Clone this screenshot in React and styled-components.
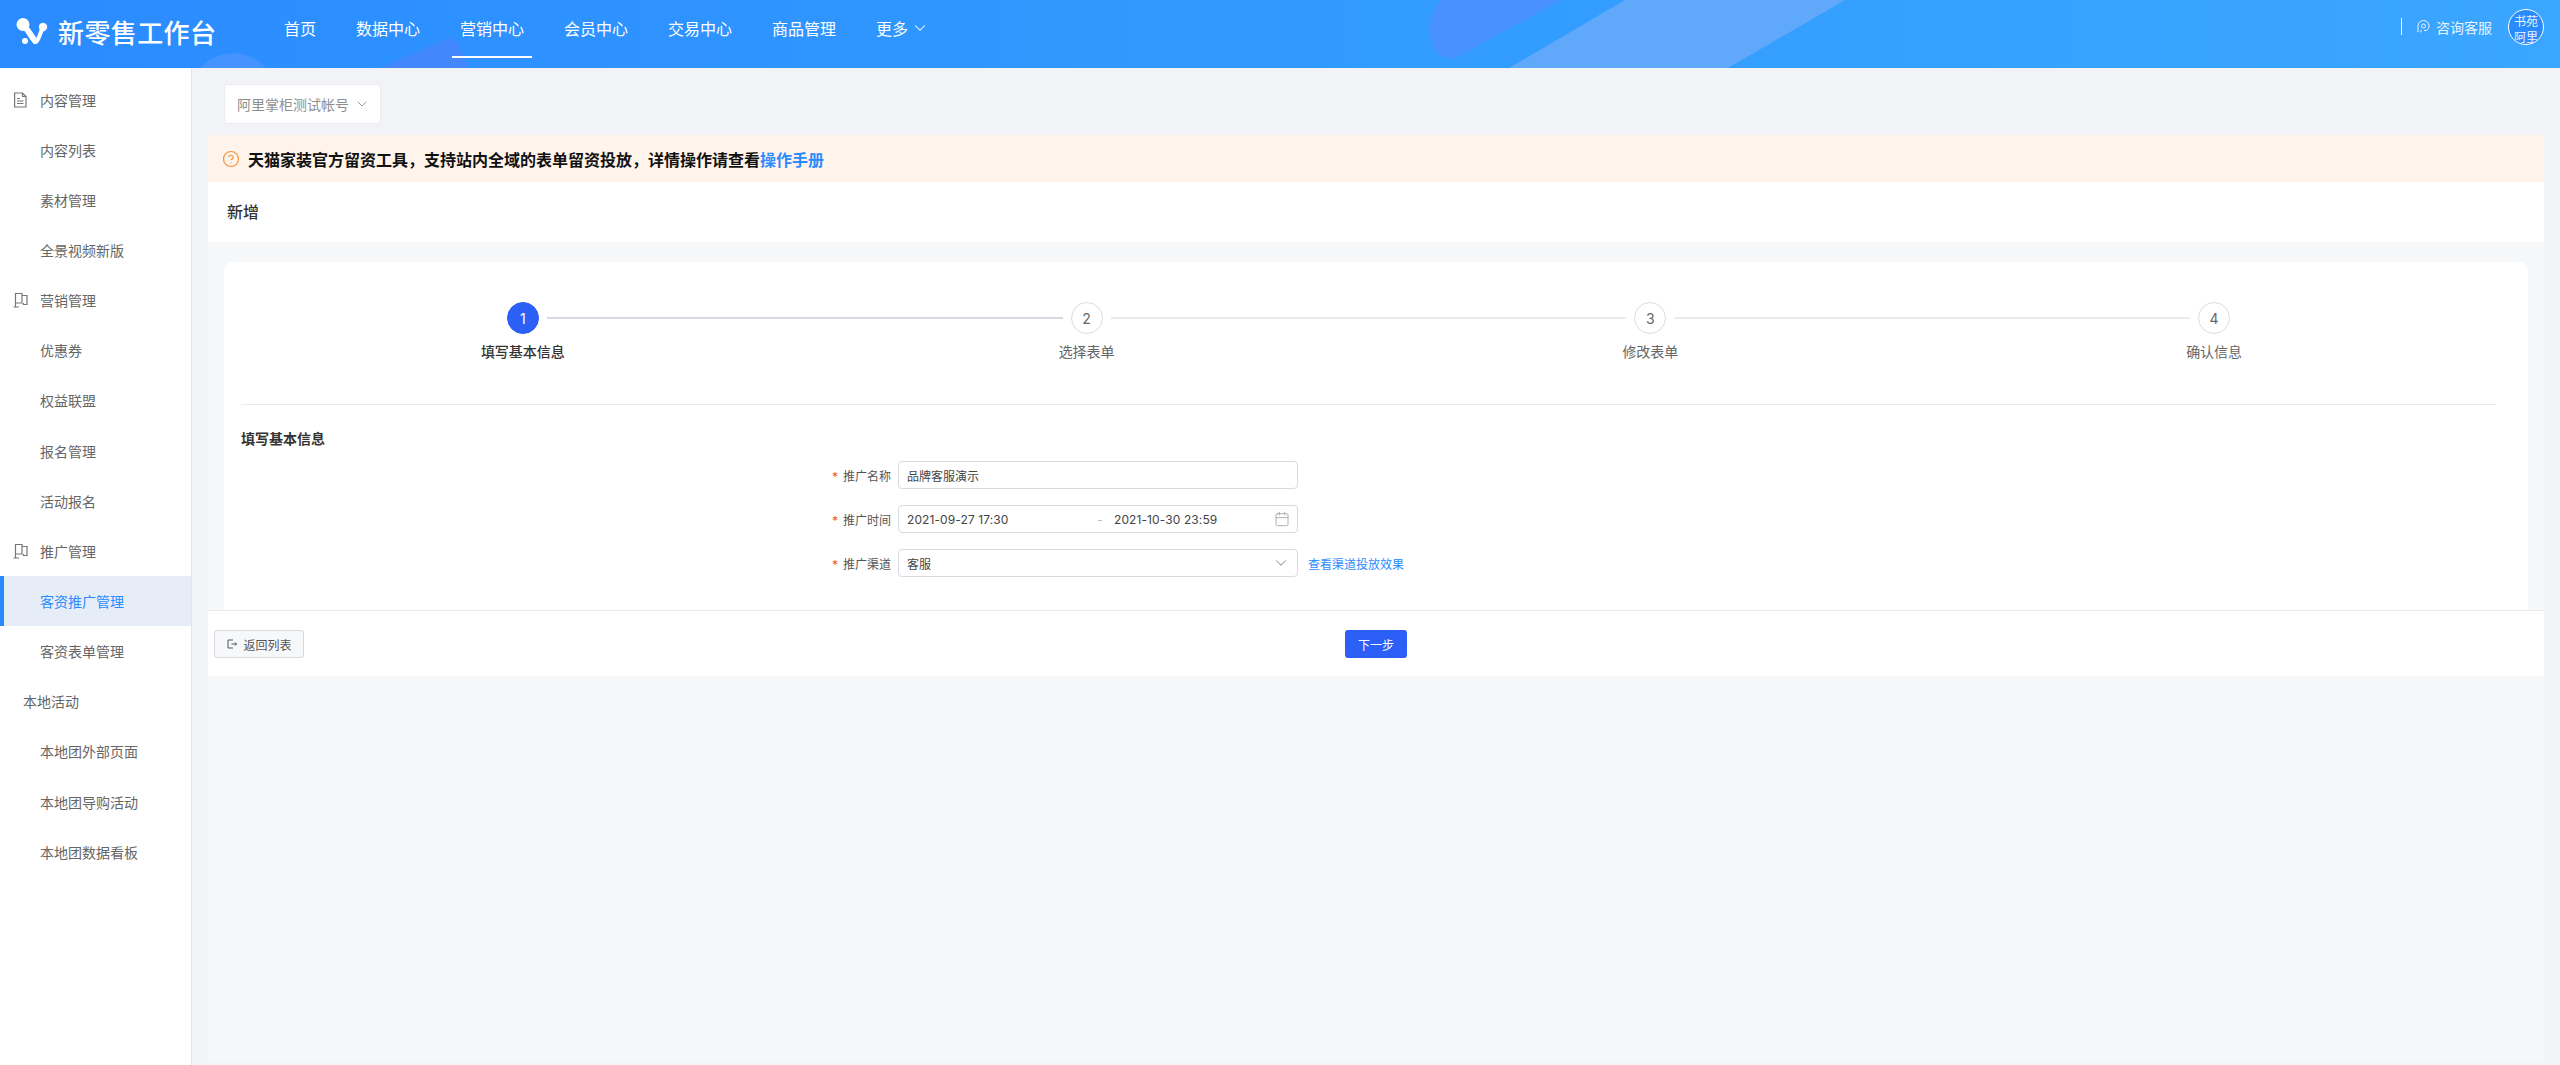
import React from 'react';
import styled, { createGlobalStyle } from 'styled-components';
import { ChevronDown, CircleHelp, Calendar } from 'lucide-react';

const FONT = `Inter, "Noto Sans CJK SC", "Noto Sans", sans-serif`;

const GlobalStyle = createGlobalStyle`
  html, body { margin: 0; padding: 0; height: 100%; }
  body { font-family: ${FONT}; color: #333; background: #f2f3f7; }
  * { box-sizing: border-box; }
`;

const Page = styled.div`
  display: flex;
  flex-direction: column;
  height: 1065px;
  overflow: hidden;
`;

const Header = styled.header`
  position: relative;
  flex: 0 0 68px;
  display: flex;
  align-items: center;
  padding-left: 15px;
  padding-right: 16px;
  overflow: hidden;
  background: linear-gradient(90deg, #2a8bff 0%, #339dff 60%, #3ba6ff 100%);
  color: #fff;
`;

const HeaderArt = styled.svg`
  position: absolute;
  left: 0;
  top: 0;
  width: 2560px;
  height: 68px;
`;

const Brand = styled.div`
  position: relative;
  display: flex;
  align-items: center;
  gap: 7px;
  width: 257px;
  margin-top: -6px;
  font-size: 26px;
  font-weight: 500;
  letter-spacing: 0.4px;
`;

const Nav = styled.nav`
  position: relative;
  display: flex;
  height: 68px;
  gap: 24px;
  margin-left: 4px;
`;

const NavItem = styled.a`
  display: flex;
  align-items: center;
  gap: 3px;
  padding: 0 8px;
  height: 58px;
  font-size: 16px;
  color: #fff;
  border-bottom: 2px solid ${p => (p.$active ? '#fff' : 'transparent')};
`;

const HeaderRight = styled.div`
  position: relative;
  display: flex;
  align-items: center;
  margin-left: auto;
  margin-top: -15px;
  font-size: 14px;
`;

const Bar = styled.span`
  width: 1px;
  height: 17px;
  background: #fff;
  margin-right: 14px;
`;

const Service = styled.span`
  display: flex;
  align-items: center;
  gap: 5px;
  margin-right: 16px;
  color: #e8f3ff;
`;

const Avatar = styled.div`
  width: 36px;
  height: 36px;
  border-radius: 50%;
  border: 1px solid #fff;
  background: #2a8bff;
  font-size: 12px;
  line-height: 16px;
  text-align: center;
  padding-top: 4px;
  color: #e8f3ff;
  overflow: hidden;
`;

const Body = styled.div`
  flex: 1;
  display: flex;
  min-height: 0;
`;

const Sidebar = styled.aside`
  flex: 0 0 192px;
  padding-top: 6.5px;
  background: #fff;
  border-right: 1px solid #e2e4ea;
`;

const MenuRow = styled.div`
  display: flex;
  align-items: center;
  height: 50.15px;
  font-size: 14px;
  color: ${p => (p.$active ? '#2a8bff' : '#666')};
  background: ${p => (p.$active ? '#e6edf7' : 'transparent')};
  border-left: ${p => (p.$active ? '4px solid #2a8bff' : 'none')};
  padding-left: ${p => {
    if (p.$active) return '36px';
    if (p.$plain) return '23px';
    return p.$group ? '13px' : '40px';
  }};
`;

const MenuIcon = styled.svg`
  width: 16px;
  height: 16px;
  margin-right: 11px;
  color: #777;
`;

const Main = styled.main`
  flex: 1;
  display: flex;
  flex-direction: column;
  min-width: 0;
  padding: 16px 16px 2px 16px;
`;

const AccountSelect = styled.div`
  display: flex;
  align-items: center;
  gap: 5px;
  align-self: flex-start;
  height: 40px;
  width: 157px;
  margin-left: 16px;
  margin-bottom: 11px;
  padding-left: 12px;
  background: #fff;
  border: 1px solid #ebecf0;
  border-radius: 3px;
  font-size: 14px;
  color: #8f8f8f;
`;

const Notice = styled.div`
  display: flex;
  align-items: center;
  flex: 0 0 47px;
  gap: 8px;
  padding-left: 14px;
  background: #fff4ec;
  border-radius: 4px 0 0 0;
  font-size: 16px;
  font-weight: 600;
  color: #111;
`;

const NoticeLink = styled.a`
  color: #2a8bff;
`;

const TitleBar = styled.div`
  display: flex;
  align-items: center;
  flex: 0 0 60px;
  padding-left: 19px;
  padding-bottom: 2px;
  background: #fff;
  font-size: 16px;
  font-weight: 500;
  color: #333;
`;

const Content = styled.div`
  flex: 1;
  display: flex;
  flex-direction: column;
  background: #f6f7f9;
`;

const Card = styled.section`
  margin: 20px 16px 0 16px;
  padding: 40px 17px 32px;
  height: 348px;
  background: #fff;
  border-radius: 8px 8px 0 0;
`;

const Stepper = styled.div`
  display: grid;
  grid-template-columns: repeat(4, 1fr);
  margin-right: 15px;
  padding-bottom: 42px;
  border-bottom: 1px solid #e8e8ec;
`;

const Step = styled.div`
  position: relative;
  display: flex;
  flex-direction: column;
  align-items: center;
  gap: 8px;
  &::after {
    content: '';
    display: ${p => (p.$last ? 'none' : 'block')};
    position: absolute;
    top: 15px;
    left: calc(50% + 24px);
    right: calc(-50% + 24px);
    height: 2px;
    background: ${p => (p.$active ? '#d8d8e2' : '#eaeaee')};
  }
`;

const StepDot = styled.div`
  display: flex;
  align-items: center;
  justify-content: center;
  width: 32px;
  height: 32px;
  border-radius: 50%;
  font-size: 14px;
  color: ${p => (p.$active ? '#fff' : '#666')};
  background: ${p => (p.$active ? '#2b5ff5' : '#fff')};
  border: 1px solid ${p => (p.$active ? '#2b5ff5' : '#dcdcdc')};
`;

const StepLabel = styled.div`
  font-size: 14px;
  line-height: 20px;
  font-weight: ${p => (p.$active ? 500 : 400)};
  color: ${p => (p.$active ? '#333' : '#666')};
`;

const SectionTitle = styled.h3`
  margin: 24px 0 12px;
  font-size: 14px;
  line-height: 20px;
  font-weight: 600;
  color: #333;
`;

const FormRow = styled.div`
  display: grid;
  grid-template-columns: 650px 400px auto;
  column-gap: 7px;
  align-items: center;
  height: 28px;
  margin-bottom: 16px;
`;

const FieldLabel = styled.label`
  font-size: 12px;
  color: #555;
  text-align: right;
  &::before {
    content: '*';
    color: #f5532d;
    margin-right: 5px;
  }
`;

const Field = styled.div`
  display: flex;
  align-items: center;
  justify-content: space-between;
  height: 28px;
  padding: 0 7px 0 8px;
  border: 1px solid #d9d9e0;
  border-radius: 4px;
  background: #fff;
  font-size: 12px;
  color: #444;
`;

const DateText = styled.span`
  flex: ${p => (p.$grow ? 1 : '0 0 190px')};
  letter-spacing: 0.1px;
`;

const RangeDash = styled.span`
  flex: 0 0 17px;
  color: #bbb;
`;

const FieldLink = styled.a`
  margin-left: 3px;
  font-size: 12px;
  color: #2a8bff;
`;

const Footer = styled.div`
  display: grid;
  grid-template-columns: 1fr auto 1fr;
  align-items: center;
  flex: 0 0 66px;
  padding: 1px 6px 0;
  background: #fff;
  border-top: 1px solid #e9eaee;
`;

const BackButton = styled.button`
  display: flex;
  align-items: center;
  justify-content: center;
  gap: 5px;
  width: 90px;
  height: 28px;
  background: #f7f8fa;
  border: 1px solid #d9d9e0;
  border-radius: 3px;
  font: 12px ${FONT};
  color: #555;
`;

const NextButton = styled.button`
  width: 62px;
  height: 28px;
  background: #2b5ff5;
  border: none;
  border-radius: 3px;
  font: 12px ${FONT};
  color: #fff;
`;

const Logo = () => (
  <svg width="36" height="30" viewBox="0 0 36 30">
    <circle cx="8" cy="8.5" r="6.5" fill="#fff" />
    <path d="M10 11 C13 14 16 20 20 25" stroke="#fff" strokeWidth="6" fill="none" strokeLinecap="round" />
    <path d="M20.5 26 C24 25 24.5 17 28 12" stroke="#fff" strokeWidth="4" fill="none" strokeLinecap="round" />
    <circle cx="28" cy="11" r="4.2" fill="#fff" />
    <circle cx="10" cy="25" r="3" fill="#fff" />
  </svg>
);

const DocIcon = () => (
  <MenuIcon viewBox="0 0 16 16" fill="none" stroke="currentColor" strokeWidth="1.2">
    <path d="M1.6 1 H9.5 L13 4.5 V15 H1.6 Z" />
    <path d="M9.5 1 V4.5 H13 M4 6.5 H7 M4 9 H10.5 M4 11.5 H10.5" />
  </MenuIcon>
);

const FlagIcon = () => (
  <MenuIcon viewBox="0 0 16 16" fill="none" stroke="currentColor" strokeWidth="1.2">
    <path d="M2.5 15 V1.5 H9 V11 H2.5 M9 3.5 H14 V12.5 H10.5 V11 M0.5 15 H6" />
  </MenuIcon>
);

const HeadIcon = () => (
  <svg width="15" height="15" viewBox="0 0 15 15" fill="none" stroke="#e8f3ff" strokeWidth="1">
    <path d="M2 13 V7 A5.5 5.5 0 0 1 13 7 C13 10 11 12 8 11.5" />
    <circle cx="7.5" cy="7" r="2" />
    <path d="M5 13.5 V11" />
  </svg>
);

const BackIcon = () => (
  <svg width="12" height="12" viewBox="0 0 12 12" fill="none" stroke="#555" strokeWidth="1">
    <path d="M7 2 H2 V10 H7" />
    <path d="M5.5 6 H10.5 M8.8 4.5 L10.5 6 L8.8 7.5" />
  </svg>
);

const navItems = ['首页', '数据中心', '营销中心', '会员中心', '交易中心', '商品管理'];

const menu = [
  { label: '内容管理', icon: 'doc' },
  { label: '内容列表' },
  { label: '素材管理' },
  { label: '全景视频新版' },
  { label: '营销管理', icon: 'flag' },
  { label: '优惠券' },
  { label: '权益联盟' },
  { label: '报名管理' },
  { label: '活动报名' },
  { label: '推广管理', icon: 'flag' },
  { label: '客资推广管理', active: true },
  { label: '客资表单管理' },
  { label: '本地活动', plain: true },
  { label: '本地团外部页面' },
  { label: '本地团导购活动' },
  { label: '本地团数据看板' },
];

const steps = ['填写基本信息', '选择表单', '修改表单', '确认信息'];

const App = () => (
  <Page>
    <GlobalStyle />
    <Header>
      <HeaderArt viewBox="0 0 2560 68">
        <circle cx="233" cy="96" r="43" fill="#5b98ff" opacity="0.55" />
        <path d="M380 68 L440 42 Q452 34 458 44 L469 68 Z" fill="#4a84fb" opacity="0.75" />
        <path d="M1440 0 H1561 L1470 50 Q1450 64 1438 54 Q1420 30 1440 0 Z" fill="#4f8ffb" opacity="0.8" />
        <path d="M1625 0 H1845 L1728 68 H1509 Z" fill="#5fa8fa" />
      </HeaderArt>
      <Brand>
        <Logo />
        新零售工作台
      </Brand>
      <Nav>
        {navItems.map(item => (
          <NavItem key={item} $active={item === '营销中心'}>{item}</NavItem>
        ))}
        <NavItem>更多 <ChevronDown size={18} strokeWidth={1.4} /></NavItem>
      </Nav>
      <HeaderRight>
        <Bar />
        <Service><HeadIcon />咨询客服</Service>
        <Avatar>书苑<br />阿里</Avatar>
      </HeaderRight>
    </Header>
    <Body>
      <Sidebar>
        {menu.map(item => (
          <MenuRow key={item.label} $group={!!item.icon} $active={item.active} $plain={item.plain}>
            {item.icon === 'doc' && <DocIcon />}
            {item.icon === 'flag' && <FlagIcon />}
            {item.label}
          </MenuRow>
        ))}
      </Sidebar>
      <Main>
        <AccountSelect>
          阿里掌柜测试帐号
          <ChevronDown size={16} strokeWidth={1.4} />
        </AccountSelect>
        <Notice>
          <CircleHelp size={18} color="#f5913b" strokeWidth={1.6} />
          <span>
            天猫家装官方留资工具，支持站内全域的表单留资投放，详情操作请查看<NoticeLink>操作手册</NoticeLink>
          </span>
        </Notice>
        <TitleBar>新增</TitleBar>
        <Content>
          <Card>
            <Stepper>
              {steps.map((step, i) => (
                <Step key={step} $active={i === 0} $last={i === steps.length - 1}>
                  <StepDot $active={i === 0}>{i + 1}</StepDot>
                  <StepLabel $active={i === 0}>{step}</StepLabel>
                </Step>
              ))}
            </Stepper>
            <SectionTitle>填写基本信息</SectionTitle>
            <FormRow>
              <FieldLabel>推广名称</FieldLabel>
              <Field>品牌客服演示</Field>
            </FormRow>
            <FormRow>
              <FieldLabel>推广时间</FieldLabel>
              <Field>
                <DateText>2021-09-27 17:30</DateText>
                <RangeDash>-</RangeDash>
                <DateText $grow>2021-10-30 23:59</DateText>
                <Calendar size={16} color="#aaa" strokeWidth={1.4} />
              </Field>
            </FormRow>
            <FormRow>
              <FieldLabel>推广渠道</FieldLabel>
              <Field>
                客服
                <ChevronDown size={18} color="#999" strokeWidth={1.4} />
              </Field>
              <FieldLink>查看渠道投放效果</FieldLink>
            </FormRow>
          </Card>
          <Footer>
            <BackButton><BackIcon />返回列表</BackButton>
            <NextButton>下一步</NextButton>
          </Footer>
        </Content>
      </Main>
    </Body>
  </Page>
);

export default App;
